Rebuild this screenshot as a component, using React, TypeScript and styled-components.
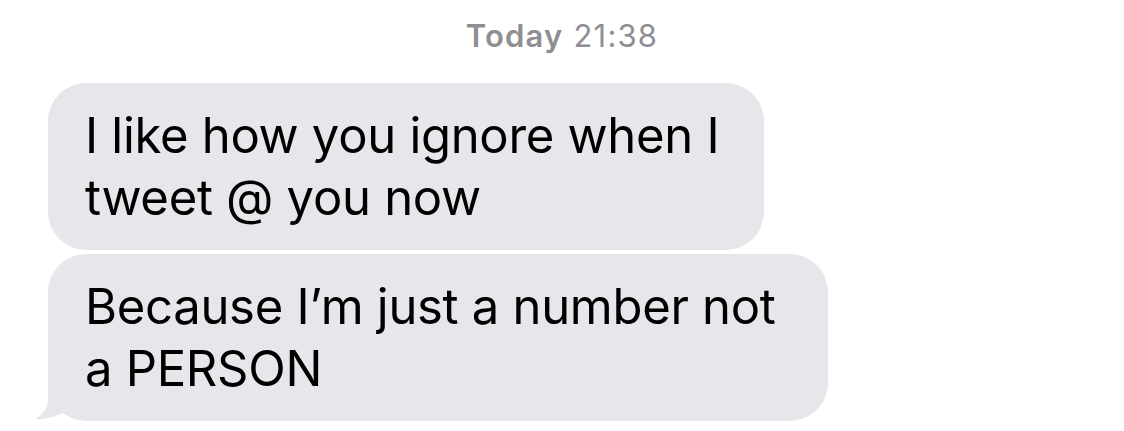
import React from "react";
import styled, { createGlobalStyle } from "styled-components";

const GlobalStyle = createGlobalStyle`
  html, body {
    margin: 0;
    padding: 0;
    background: #ffffff;
  }
  body {
    font-family: Inter, "Liberation Sans", Arial, sans-serif;
    -webkit-font-smoothing: antialiased;
  }
`;

const BUBBLE_GREY = "#e6e6eb";

type Message = { id: number; lines: string[]; tail?: boolean; padRight: number };

const messages: Message[] = [
  { id: 1, lines: ["I like how you ignore when I", "tweet @ you now"], padRight: 45 },
  { id: 2, lines: ["Because I\u2019m just a number not", "a PERSON"], tail: true, padRight: 52 },
];

const Tail = () => (
  <TailSvg width="44" height="46" viewBox="0 0 44 46">
    <path
      d="M14 0 L14 24 C14 33 9 40 1 44 C10 45 22 41.5 31 37 L42 18 L42 0 Z"
      fill={BUBBLE_GREY}
    />
  </TailSvg>
);

const App: React.FC = () => {
  return (
    <Screen>
      <GlobalStyle />
      <Timestamp>
        <strong>Today</strong> 21:38
      </Timestamp>
      <Thread>
        {messages.map((msg) => (
          <Bubble key={msg.id} $padRight={msg.padRight}>
            {msg.lines.map((line, i) => (
              <Line key={i}>{line}</Line>
            ))}
            {msg.tail && <Tail />}
          </Bubble>
        ))}
      </Thread>
    </Screen>
  );
};

export default App;

const Screen = styled.div`
  width: 1124px;
  height: 431px;
  overflow: hidden;
  display: flex;
  flex-direction: column;
  padding-top: 18px;
  box-sizing: border-box;
`;

const Timestamp = styled.div`
  text-align: center;
  font-size: 31px;
  line-height: 36px;
  color: #8e8e93;
  letter-spacing: 1.2px;

  & > strong {
    font-weight: 600;
  }
`;

const Thread = styled.div`
  display: flex;
  flex-direction: column;
  align-items: flex-start;
  gap: 4px;
  padding-left: 48px;
  margin-top: 29px;
`;

const Bubble = styled.div<{ $padRight: number }>`
  position: relative;
  background: ${BUBBLE_GREY};
  border-radius: 38px;
  padding: 22px ${(p) => p.$padRight}px 21px 37px;
  color: #000000;
  font-size: 49px;
  line-height: 62px;
  letter-spacing: -0.3px;
`;

const Line = styled.div`
  white-space: nowrap;
`;

const TailSvg = styled.svg`
  position: absolute;
  left: -14px;
  bottom: 0;
  display: block;
`;
